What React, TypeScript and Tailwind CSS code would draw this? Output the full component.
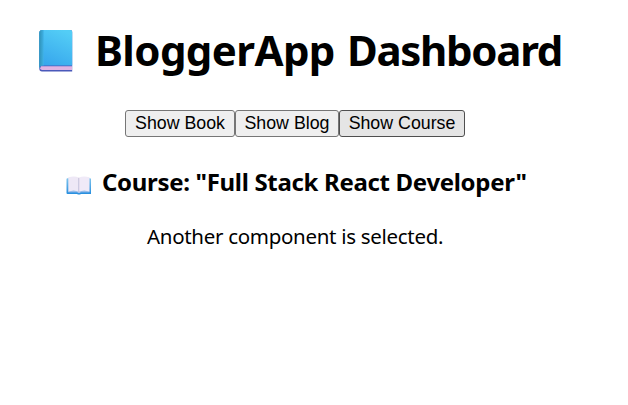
import React from "react";

function BlueBook() {
  return (
    <svg className="mt-[6px] h-[44px] w-[34px] shrink-0" viewBox="0 0 34 44" aria-label="Blue book">
      <defs>
        <linearGradient id="cover" x1="0.7" y1="0" x2="0.3" y2="1">
          <stop offset="0" stopColor="#53cdf6" />
          <stop offset="1" stopColor="#36a5ec" />
        </linearGradient>
        <linearGradient id="spine" x1="0" y1="0" x2="1" y2="0">
          <stop offset="0" stopColor="#2f92b8" />
          <stop offset="1" stopColor="#3fb2e6" />
        </linearGradient>
      </defs>
      <path d="M0.3 5Q0.3 2 3.3 2H31.5Q33.2 2 33.2 3.7V43.5H3Q0.3 43.5 0.3 40.5Z" fill="#4a59ba" />
      <path d="M2 38.3H33V42H3.2Q1.2 42 1.2 40.2Z" fill="#dfb3e3" />
      <path d="M0.3 5Q0.3 2 3.3 2H31.5Q33.2 2 33.2 3.7V37.6H3.5Q1.2 37.6 0.3 40Z" fill="url(#cover)" />
      <path d="M0.3 5Q0.3 2 3.3 2H4.7V37.6H3.5Q1.2 37.6 0.3 40Z" fill="url(#spine)" />
    </svg>
  );
}

function OpenBook() {
  return (
    <svg className="mt-[9px] h-[20px] w-[26px] shrink-0" viewBox="0 0 26 20" aria-label="Open book">
      <defs>
        <linearGradient id="binding" x1="0" y1="0" x2="0" y2="1">
          <stop offset="0" stopColor="#7fc4ed" />
          <stop offset="1" stopColor="#238cde" />
        </linearGradient>
      </defs>
      <path d="M1.5 3.2H24Q25 3.2 25 4.2V19H15Q13 20.2 11 19H1.5Q0.5 19 0.5 18V4.2Q0.5 3.2 1.5 3.2Z" fill="url(#binding)" />
      <path d="M2.2 16.2H11.5L13 17.3L14.5 16.2H23.5V17.2H14.8L13 18.2L11.2 17.2H2.2Z" fill="#b7c8ed" />
      <path d="M2.3 2.3Q9 0.4 12.8 2.8V17Q9 15 2.3 16.5Z" fill="#eee8f6" />
      <path d="M12.8 2.8Q17 0.4 23.5 2.3V16.5Q17 15 12.8 17Z" fill="#f0eaf8" />
      <path d="M12.8 2.8V17" stroke="#c8bed6" strokeWidth="0.9" />
    </svg>
  );
}

export default function App() {
  return (
    <main className="flex h-[405px] w-[590px] flex-col items-center bg-white pt-[22px] font-['Segoe_UI','Noto_Sans',sans-serif] text-black">
      <h1 className="flex h-14 w-[512px] whitespace-nowrap text-[42px] leading-[56px] font-bold">
        <BlueBook />
        <span className="ml-[22px] w-[252px] shrink-0 tracking-[-0.6px]">BloggerApp</span>
        <span className="shrink-0 tracking-[-1.3px]">Dashboard</span>
      </h1>
      <div className="mt-[32px] flex h-[27px] w-[340px] font-['Liberation_Sans',Arial,sans-serif] text-[17.8px] leading-[25px] whitespace-nowrap">
        <button className="w-[110px] rounded-[3px] border border-[#767676] bg-[#efefef]">Show Book</button>
        <button className="w-[104px] rounded-[3px] border border-[#767676] bg-[#efefef]">Show Blog</button>
        <button className="w-[126px] rounded-[3px] border border-[#4f4f4f] bg-[#e5e5e5]">Show Course</button>
      </div>
      <h3 className="mt-[29px] flex h-8 w-[458px] whitespace-nowrap text-[24px] leading-8 font-bold">
        <OpenBook />
        <span className="ml-[10px] tracking-[-0.32px]">Course: "Full Stack React Developer"</span>
      </h3>
      <p className="mt-[24px] h-7 w-[296px] whitespace-nowrap text-[20.5px] leading-7 tracking-[-0.3px]">Another component is selected.</p>
    </main>
  );
}
